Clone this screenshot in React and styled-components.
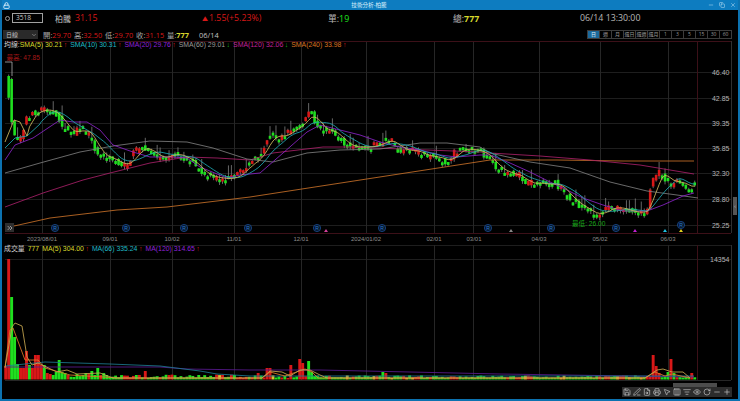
import React from "react";
import styled, { createGlobalStyle } from "styled-components";
import {
  Lock, Minus, Copy, X, ChevronDown, Save, PenLine, FileSearch, Printer,
  MousePointer2, Columns3, ListFilter, Eye, RotateCw, Plus, ChevronsRight,
} from "lucide-react";

const GlobalStyle = createGlobalStyle`
  html, body { margin: 0; padding: 0; background: #000; overflow: hidden; }
  * { box-sizing: border-box; }
`;

const FONT = `"Open Sans", "Noto Sans CJK TC", sans-serif`;
const NARROW = `"Liberation Sans", "Noto Sans CJK TC", sans-serif`;
const RED = "#d81818";
const GREEN = "#1fe01f";
const YELLOW = "#d8d82c";

/* chart data, in page pixels read off the picture */
const closeKeys = [
  [8, 92], [12, 125], [15, 139], [20, 138], [27, 116], [36, 112], [42, 108], [50, 112], [58, 115],
  [62, 126], [68, 132], [75, 133], [80, 128], [90, 136], [97, 155], [107, 157], [115, 162],
  [125, 166], [130, 160], [135, 150], [145, 147], [155, 157], [165, 158], [172, 152], [180, 157],
  [190, 160], [200, 172], [205, 175], [215, 178], [230, 179], [240, 173], [246, 165], [258, 158],
  [265, 143], [270, 134], [280, 138], [290, 130], [300, 125], [305, 117], [311, 110], [315, 125],
  [320, 130], [330, 130], [340, 140], [345, 145], [350, 147], [370, 147], [380, 143], [385, 140],
  [392, 141], [398, 150], [410, 150], [420, 153], [427, 158], [435, 155], [440, 160], [447, 162],
  [452, 155], [458, 150], [463, 148], [470, 150], [480, 151], [490, 160], [495, 168], [505, 172],
  [515, 176], [520, 175], [525, 185], [535, 182], [545, 185], [555, 183], [562, 190], [570, 200],
  [578, 205], [585, 210], [590, 212], [597, 216], [605, 209], [615, 207], [625, 210], [635, 213],
  [645, 211], [648, 209], [650, 190], [654, 175], [658, 172], [663, 176], [668, 181], [672, 185],
  [678, 179], [684, 186], [690, 191], [694, 182],
];

const sma20 = [
  [5, 160], [15, 145], [33, 138], [60, 120], [73, 122], [87, 122], [100, 130], [113, 145], [133, 152],
  [150, 157], [173, 157], [187, 158], [200, 167], [227, 178], [240, 175], [260, 173], [283, 153],
  [307, 132], [320, 125], [340, 130], [360, 135], [380, 142], [400, 147], [420, 150], [440, 155],
  [457, 157], [480, 155], [490, 155], [510, 163], [530, 172], [550, 182], [563, 188], [583, 198],
  [603, 205], [623, 211], [647, 211], [663, 205], [683, 196], [694, 193],
];
const sma60 = [
  [5, 173], [40, 163], [80, 152], [113, 146], [150, 141], [187, 142], [213, 148], [247, 159], [273, 162],
  [307, 153], [340, 150], [380, 149], [420, 143], [447, 143], [480, 147], [490, 153], [530, 162],
  [570, 168], [610, 182], [647, 191], [677, 195], [698, 198],
];
const sma120 = [
  [5, 207], [43, 193], [83, 180], [110, 173], [150, 163], [187, 157], [217, 158], [250, 160], [273, 153],
  [323, 147], [350, 147], [400, 149], [427, 150], [480, 152], [490, 153], [540, 156], [590, 160],
  [640, 165], [694, 174],
];
const sma240 = [
  [5, 228], [50, 218], [117, 210], [167, 207], [250, 197], [490, 160], [557, 160], [623, 161], [694, 161],
];
const sma5Head = [[5, 142], [14, 120], [20, 122], [27, 136]];
const sma10Head = [[5, 148], [15, 138], [27, 136], [40, 124]];

const volMa5 = [
  [5, 368], [12, 327], [15, 323], [22, 326], [27, 357], [32, 365], [38, 363], [57, 372], [67, 370], [77, 374],
  [100, 373], [113, 378], [262, 378], [270, 371], [282, 372], [290, 376], [300, 370], [310, 370], [320, 375],
  [327, 378], [645, 378], [657, 370], [663, 369], [672, 372], [683, 372], [690, 378],
];
const volMaOrange = [
  [5, 367], [10, 330], [13, 328], [25, 360], [38, 360], [45, 368], [70, 375], [120, 378], [262, 378],
  [270, 372], [285, 376], [305, 369], [312, 372], [318, 378], [645, 378], [655, 372], [665, 376], [672, 374], [690, 378],
];
const volMa66 = [
  [5, 366], [45, 362], [110, 364], [160, 366], [200, 371], [217, 374], [250, 376], [490, 376], [694, 376],
];
const volMa120 = [
  [5, 367], [50, 367], [100, 367], [160, 367], [187, 369], [250, 370], [320, 370], [500, 374], [694, 377],
];

/* big volume bars: x, top, green flag */
const volSpikes = [
  [6, 366], [9, 259], [12, 297, 1], [15, 337, 1], [18, 364, 1], [21, 368], [24, 368], [27, 351], [30, 365, 1], [33, 368],
  [36, 355], [39, 355], [42, 365], [45, 365, 1], [48, 373], [51, 374], [54, 375, 1], [57, 372, 1], [60, 360, 1],
  [63, 372, 1], [66, 373, 1], [69, 375], [78, 374, 1], [84, 375, 1], [91, 371, 1], [94, 375, 1], [97, 368, 1], [100, 375],
  [137, 375, 1], [144, 371], [258, 373], [268, 368], [271, 368], [292, 365], [301, 359], [304, 363], [310, 361, 1],
  [313, 372, 1], [383, 372, 1], [385, 373], [653, 355], [656, 366], [659, 373], [668, 372, 1], [672, 359], [675, 373, 1], [693, 373],
];

const interp = (keys, x) => {
  if (x <= keys[0][0]) return keys[0][1];
  for (let i = 1; i < keys.length; i++) {
    if (x <= keys[i][0]) {
      const [x0, y0] = keys[i - 1];
      const [x1, y1] = keys[i];
      return y0 + ((x - x0) / (x1 - x0)) * (y1 - y0);
    }
  }
  return keys[keys.length - 1][1];
};

let seed = 7;
const rnd = () => {
  seed = (seed * 16807) % 2147483647;
  return seed / 2147483647;
};

const STEP = 2.97;
const COUNT = 233;
const xs = Array.from({ length: COUNT }, (_, i) => 5.7 + i * STEP);
const closes = xs.map((x) => interp(closeKeys, x));

const candles = [];
xs.forEach((x, i) => {
  const close = closes[i] + (rnd() - 0.5) * 7;
  const open = i === 1 ? 76 : i === 2 ? 79 : closes[Math.max(i - 1, 0)] + (rnd() - 0.5) * 7;
  const top = Math.min(open, close);
  const bottom = Math.max(Math.max(open, close), top + 3);
  const spike = rnd() > 0.76 ? 4 + rnd() * 7 : rnd() * 2;
  candles.push({
    x,
    top,
    bottom,
    high: top - spike,
    low: bottom + rnd() * 3,
    up: close < open - 2,
  });
});

const toPoints = (pairs) => pairs.map(([x, y]) => `${x.toFixed(1)},${y.toFixed(1)}`).join(" ");

const rolling = (period, head) => {
  const headEnd = head[head.length - 1][0];
  const tail = xs
    .map((x, i) => {
      if (x <= headEnd) return null;
      const from = Math.max(0, i - period + 1);
      const part = closes.slice(from, i + 1);
      return [x, part.reduce((a, b) => a + b, 0) / part.length];
    })
    .filter(Boolean);
  return [...head, ...tail];
};

const volumes = xs.map((x, i) => {
  const hit = volSpikes.find(([sx]) => Math.abs(sx - x) < STEP / 2);
  const small = x < 110 ? 5 : x < 240 ? 3.5 : 2.6;
  const top = hit ? hit[1] : 379 - (1 + rnd() * small);
  const roll = rnd();
  let color = candles[i].up ? RED : GREEN;
  if (hit) color = hit[2] ? GREEN : RED;
  else if (roll > 0.93) color = "#e0c030";
  return { x, top, color };
});

const gridX = [42, 110, 172, 234, 301, 366, 434, 473, 539, 600, 668];
const gridY = [72, 98, 123, 148, 173, 199, 225];
const prices = ["46.40", "42.85", "39.35", "35.85", "32.30", "28.80", "25.25"];
const dates = [
  [42, "2023/08/01"], [110, "09/01"], [172, "10/02"], [234, "11/01"], [301, "12/01"], [366, "2024/01/02"],
  [434, "02/01"], [474, "03/01"], [539, "04/03"], [600, "05/02"], [668, "06/03"],
];
const rMarks = [[55, 228], [126, 228], [184, 228], [248, 228], [317, 228], [382, 228], [488, 228], [551, 228], [616, 228], [681, 225]];
const triangles = [[326, "#d0409a"], [511, "#888888"], [635, "#c020d0"], [665, "#20c0e0"], [681, "#e0d020"]];

const maLegend = [
  ["SMA(10) 30.31", "#1fb8c4", true],
  ["SMA(20) 29.76", "#8f22d8", true],
  ["SMA(60) 29.01", "#9a9a9a", false],
  ["SMA(120) 32.06", "#c4209a", false],
  ["SMA(240) 33.98", "#dc7420", true],
];
const volLegend = [
  ["MA(5) 304.00", YELLOW],
  ["MA(66) 335.24", "#1fb8c4"],
  ["MA(120) 314.65", "#8f22d8"],
];
const periods = ["日", "週", "月", "還日", "還週", "還月", "1", "3", "5", "15", "30", "60"];
const stats = [["開", "29.70"], ["高", "32.50"], ["低", "29.70"], ["收", "31.15"]];
const tools = [Save, PenLine, FileSearch, Printer, MousePointer2, Columns3, ListFilter, Eye, RotateCw, Minus, Plus];

const Frame = styled.div`
  width: 740px;
  height: 401px;
  display: flex;
  flex-direction: column;
  background: #000;
  border: solid #0c72b0;
  border-width: 0 2px 2px;
  font-family: ${FONT};
  position: relative;
  overflow: hidden;
`;

const TitleBar = styled.header`
  height: 10px;
  flex: none;
  margin: 0 -2px;
  padding: 0 4px 0 3px;
  background: #0d7cc0;
  display: flex;
  align-items: center;
  color: #d8eefa;
`;

const TitleText = styled.span`
  flex: 1;
  text-align: center;
  font-size: 5.6px;
  line-height: 10px;
  margin-left: 20px;
`;

const WindowButtons = styled.div`
  display: flex;
  gap: 5px;
  color: #bfe0f4;
`;

const QuoteBar = styled.div`
  height: 20px;
  flex: none;
  padding-bottom: 4px;
  display: grid;
  grid-template-columns: 53px 147px 126px 125px 127px 1fr;
  align-items: center;
  font-size: 8.8px;
  color: #b8b8b8;
`;

const CodeGroup = styled.div`
  display: flex;
  align-items: center;
  gap: 2px;
  padding-left: 3px;
`;

const RoundMark = styled.span`
  width: 5px;
  height: 5px;
  border-radius: 50%;
  border: 1px solid #999;
  flex: none;
`;

const CodeBox = styled.div`
  width: 31px;
  height: 10px;
  border: 1px solid #a0a0a0;
  font-size: 6.6px;
  line-height: 8px;
  padding-left: 3px;
  color: #c8c8c8;
`;

const NameGroup = styled.div`
  display: flex;
  align-items: center;
  gap: 4px;
`;

const Name = styled.span`
  color: #c4c4c4;
  font-size: 8px;
`;

const Value = styled.span`
  color: ${(p) => p.$color};
  font-weight: ${(p) => (p.$bold ? 700 : 400)};
`;

const Triangle = styled.span`
  color: ${RED};
  font-size: 6px;
  margin-right: 1px;
`;

const ToolRow = styled.div`
  height: 11px;
  flex: none;
  display: flex;
  align-items: center;
  padding: 0 6px 2px 1px;
  font-size: 7.4px;
  color: #a8a8a8;
`;

const SelectBox = styled.div`
  width: 35px;
  height: 9px;
  margin-right: 5px;
  padding: 0 1px 0 3px;
  background: #2a2a2a;
  color: #c0c0c0;
  font-size: 6px;
  display: flex;
  align-items: center;
  justify-content: space-between;
`;

const Stat = styled.span`
  width: 31px;
  white-space: nowrap;
`;

const DateText = styled.span`
  margin-left: 1px;
  color: #c0c0c0;
`;

const Periods = styled.div`
  margin-left: auto;
  display: grid;
  grid-template-columns: repeat(12, 12px);
`;

const PeriodButton = styled.div`
  height: 9px;
  border: 1px solid #3c3c3c;
  margin-left: -1px;
  width: 13px;
  font-size: 5px;
  line-height: 7px;
  text-align: center;
  color: ${(p) => (p.$active ? "#e0f0fa" : "#9a9a9a")};
  background: ${(p) => (p.$active ? "#1c6a9c" : "transparent")};
`;

const Pane = styled.section`
  position: relative;
  flex: none;
  height: ${(p) => p.$height}px;
`;

const ChartSvg = styled.svg`
  display: block;
  width: 736px;
  height: 100%;
`;

const Legend = styled.div`
  position: absolute;
  left: ${(p) => p.$left}px;
  top: ${(p) => p.$top}px;
  display: flex;
  gap: ${(p) => p.$gap}px;
  font-family: ${NARROW};
  font-size: 6.9px;
  line-height: 10px;
  white-space: nowrap;
`;

const LegendTitle = styled.span`
  color: #d0d0d0;
`;

const LegendItem = styled.span`
  color: ${(p) => p.$color};
`;

const Arrow = styled.span`
  color: ${(p) => (p.$up ? RED : "#18b018")};
  margin-left: 1.5px;
`;

const GridLine = styled.line`
  stroke: ${(p) => p.$color || "#262626"};
  stroke-width: 1;
  shape-rendering: crispEdges;
`;

const MaLine = styled.polyline`
  fill: none;
  stroke: ${(p) => p.$color};
  stroke-width: 0.85;
  stroke-linejoin: round;
`;

const AxisLabel = styled.text`
  fill: #b4b4b4;
  font-family: ${NARROW};
  font-size: 7px;
  text-anchor: end;
`;

const DateLabel = styled.text`
  fill: #8c8c8c;
  font-family: ${NARROW};
  font-size: 6px;
  text-anchor: middle;
`;

const PriceNote = styled.text`
  fill: ${(p) => p.$color};
  font-family: ${NARROW};
  font-size: 6.6px;
`;

const MarkLetter = styled.text`
  fill: #2a78c8;
  font-family: ${NARROW};
  font-size: 5px;
  text-anchor: middle;
`;

const ExpandButton = styled.button`
  position: absolute;
  left: 3px;
  top: 182px;
  width: 9px;
  height: 9px;
  padding: 0;
  border: 0;
  background: #2e2e2e;
  color: #d0d0d0;
  display: flex;
  align-items: center;
  justify-content: center;
`;

const SideHandle = styled.div`
  position: absolute;
  right: 1px;
  top: 156px;
  width: 4px;
  height: 18px;
  background: #555;
  color: #ccc;
  font-size: 5px;
  line-height: 18px;
  text-align: center;
`;

const Footer = styled.footer`
  height: 16px;
  flex: none;
  position: relative;
  display: flex;
  justify-content: flex-end;
  align-items: flex-end;
  padding: 0 6px 2px 0;
`;

const ScrollThumb = styled.div`
  position: absolute;
  left: 671px;
  top: 0;
  width: 44px;
  height: 4px;
  background: #4c4c4c;
`;

const ToolStrip = styled.div`
  display: flex;
`;

const ToolButton = styled.div`
  width: 10px;
  height: 10px;
  background: #2c2c2c;
  color: #c4c4c4;
  display: flex;
  align-items: center;
  justify-content: center;
`;

const PriceChart = () => (
  <ChartSvg viewBox="2 41 736 204" preserveAspectRatio="none">
    {gridY.map((y) => (
      <GridLine key={y} x1="5" x2="731" y1={y} y2={y} $color="#1e1e1e" />
    ))}
    {gridX.map((x) => (
      <GridLine key={x} x1={x} x2={x} y1="41" y2="233" />
    ))}
    <GridLine x1="697" x2="697" y1="41" y2="233" $color="#3c1018" />
    <GridLine x1="5" x2="731" y1="41" y2="41" $color="#3c1018" />
    <GridLine x1="5" x2="731" y1="233" y2="233" $color="#3c1018" />
    <GridLine x1="731" x2="731" y1="41" y2="233" $color="#303030" />

    {candles.slice(1).map((c) => (
      <g key={c.x}>
        <line x1={c.x} x2={c.x} y1={c.high} y2={c.low} stroke="#808080" strokeWidth="0.8" />
        <rect x={c.x - 1.3} y={c.top} width="2.6" height={c.bottom - c.top} fill={c.up ? RED : GREEN} />
      </g>
    ))}

    <MaLine points={toPoints(sma240)} $color="#c87028" />
    <MaLine points={toPoints(sma120)} $color="#a82068" />
    <MaLine points={toPoints(sma60)} $color="#7c7c7c" />
    <MaLine points={toPoints(sma20)} $color="#8a24c8" />
    <MaLine points={toPoints(rolling(10, sma10Head))} $color="#1fa8b4" />
    <MaLine points={toPoints(rolling(5, sma5Head))} $color="#d0b860" />

    <PriceNote x="6.5" y="59.5" $color="#a81818">最高: 47.85</PriceNote>
    <polyline points="5,62 12,62 12,76" fill="none" stroke="#b0b0b0" strokeWidth="0.8" />
    <PriceNote x="572" y="225.5" $color="#18a818">最低: 26.00</PriceNote>

    {rMarks.map(([x, y]) => (
      <g key={x}>
        <circle cx={x} cy={y} r="3.6" fill="#06162c" stroke="#1a4c90" strokeWidth="0.8" />
        <MarkLetter x={x} y={y + 1.8}>R</MarkLetter>
      </g>
    ))}
    {triangles.map(([x, color]) => (
      <polygon key={x} points={`${x - 2},232 ${x + 2},232 ${x},229`} fill={color} />
    ))}

    {prices.map((p, i) => (
      <AxisLabel key={p} x="729.5" y={gridY[i] + 2.5}>{p}</AxisLabel>
    ))}
    {dates.map(([x, label]) => (
      <DateLabel key={label} x={x} y="240.5">{label}</DateLabel>
    ))}
  </ChartSvg>
);

const VolumeChart = () => (
  <ChartSvg viewBox="2 245 736 138" preserveAspectRatio="none">
    <GridLine x1="5" x2="731" y1="245.5" y2="245.5" $color="#1e1e1e" />
    <GridLine x1="5" x2="731" y1="259" y2="259" $color="#1e1e1e" />
    <GridLine x1="5" x2="731" y1="380" y2="380" $color="#262626" />
    {gridX.map((x) => (
      <GridLine key={x} x1={x} x2={x} y1="245" y2="380" />
    ))}
    <GridLine x1="697" x2="697" y1="245" y2="380" $color="#3c1018" />
    <GridLine x1="731" x2="731" y1="245" y2="380" $color="#303030" />
    {volumes.map((v) => (
      <rect key={v.x} x={v.x - 1.45} y={v.top} width="2.9" height={379.5 - v.top} fill={v.color} />
    ))}
    <MaLine points={toPoints(volMa120)} $color="#5a1a90" />
    <MaLine points={toPoints(volMa66)} $color="#1c7a90" />
    <MaLine points={toPoints(volMaOrange)} $color="#e07828" />
    <MaLine points={toPoints(volMa5)} $color="#c8a850" />
    <AxisLabel x="729.5" y="262">14354</AxisLabel>
  </ChartSvg>
);

const App = () => (
  <>
    <GlobalStyle />
    <Frame>
      <TitleBar>
        <Lock size={7} strokeWidth={3} />
        <TitleText>技術分析-柏騰</TitleText>
        <WindowButtons>
          <Minus size={6} />
          <Copy size={6} />
          <X size={6} />
        </WindowButtons>
      </TitleBar>

      <QuoteBar>
        <CodeGroup>
          <RoundMark />
          <CodeBox>3518</CodeBox>
        </CodeGroup>
        <NameGroup>
          <Name>柏騰</Name>
          <Value $color={RED}>31.15</Value>
        </NameGroup>
        <span>
          <Triangle>▲</Triangle>
          <Value $color={RED}>1.55(+5.23%)</Value>
        </span>
        <span>
          單:<Value $color={GREEN}>19</Value>
        </span>
        <span>
          總:<Value $color={YELLOW} $bold>777</Value>
        </span>
        <span>06/14 13:30:00</span>
      </QuoteBar>

      <ToolRow>
        <SelectBox>
          日線
          <ChevronDown size={6} />
        </SelectBox>
        {stats.map(([label, value]) => (
          <Stat key={label}>
            {label}:<Value $color={RED}>{value}</Value>
          </Stat>
        ))}
        <Stat>
          量:<Value $color={YELLOW} $bold>777</Value>
        </Stat>
        <DateText>06/14</DateText>
        <Periods>
          {periods.map((p, i) => (
            <PeriodButton key={p} $active={i === 0}>{p}</PeriodButton>
          ))}
        </Periods>
      </ToolRow>

      <Pane $height={204}>
        <PriceChart />
        <Legend $left={2} $top={-1} $gap={3}>
          <LegendTitle>
            均線:<Value $color={YELLOW}>SMA(5) 30.21</Value>
            <Arrow $up>↑</Arrow>
          </LegendTitle>
          {maLegend.map(([text, color, up]) => (
            <LegendItem key={text} $color={color}>
              {text}
              <Arrow $up={up}>{up ? "↑" : "↓"}</Arrow>
            </LegendItem>
          ))}
        </Legend>
        <ExpandButton aria-label="expand">
          <ChevronsRight size={8} />
        </ExpandButton>
        <SideHandle>‹</SideHandle>
      </Pane>

      <Pane $height={138}>
        <VolumeChart />
        <Legend $left={2} $top={-1} $gap={3}>
          <LegendTitle>成交量</LegendTitle>
          <LegendItem $color={YELLOW}>777</LegendItem>
          {volLegend.map(([text, color]) => (
            <LegendItem key={text} $color={color}>
              {text}
              <Arrow $up>↑</Arrow>
            </LegendItem>
          ))}
        </Legend>
      </Pane>

      <Footer>
        <ScrollThumb />
        <ToolStrip>
          {tools.map((Icon, i) => (
            <ToolButton key={i}>
              <Icon size={8} strokeWidth={2} />
            </ToolButton>
          ))}
        </ToolStrip>
      </Footer>
    </Frame>
  </>
);

export default App;
